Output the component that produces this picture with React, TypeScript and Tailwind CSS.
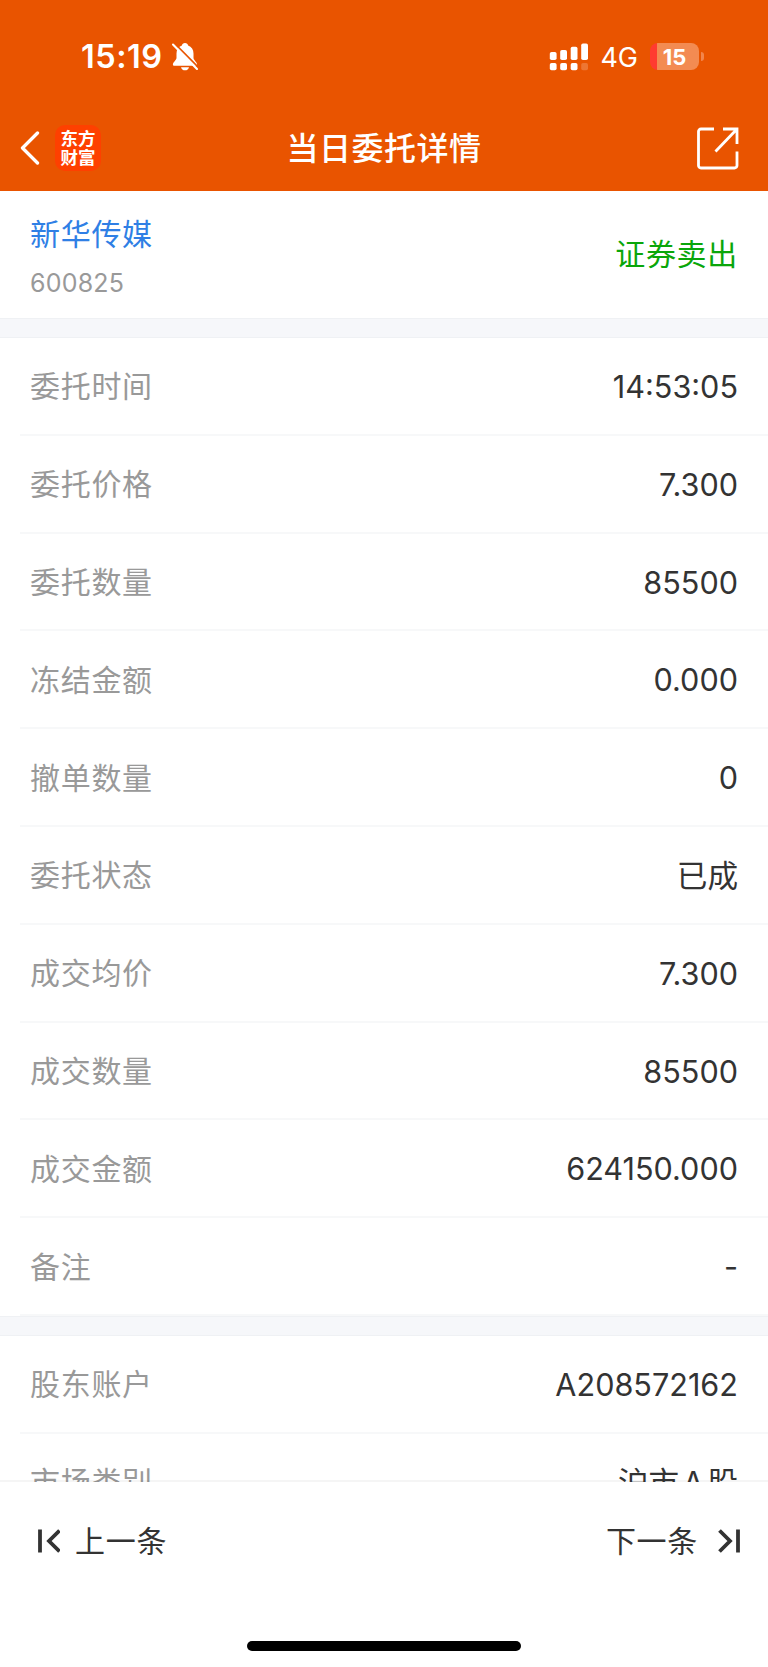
type Row = { label: string; value: string };

const orderRows: Row[] = [
  { label: "委托时间", value: "14:53:05" },
  { label: "委托价格", value: "7.300" },
  { label: "委托数量", value: "85500" },
  { label: "冻结金额", value: "0.000" },
  { label: "撤单数量", value: "0" },
  { label: "委托状态", value: "已成" },
  { label: "成交均价", value: "7.300" },
  { label: "成交数量", value: "85500" },
  { label: "成交金额", value: "624150.000" },
  { label: "备注", value: "-" },
];

const accountRows: Row[] = [
  { label: "股东账户", value: "A208572162" },
  { label: "市场类别", value: "沪市 A 股" },
];

function BellOff() {
  return (
    <svg width="28" height="30" viewBox="0 0 28 30" className="ml-[8px]">
      <path
        d="M14 1c1.700 0 2.900 1 3.100 2.400 3.500 1.200 5.400 4.200 5.400 8v4.300c0 2.500 3.600 4.300 3.600 6.800 0 .8-.6 1.300-1.500 1.300H3.400c-.9 0-1.500-.5-1.500-1.300 0-2.500 3.600-4.300 3.600-6.800v-4.300c0-3.800 1.900-6.800 5.400-8C11.100 2 12.300 1 14 1z"
        fill="#fff"
      />
      <path d="M10 25.200h8c-.4 1.900-1.900 3.100-4 3.100s-3.600-1.200-4-3.100z" fill="#fff" />
      <path d="M3.300 1.200 28.200 26.200" stroke="#e95400" strokeWidth="1.800" />
      <path d="M2 2.600 26 26.900" stroke="#fff" strokeWidth="2.100" strokeLinecap="round" />
    </svg>
  );
}

function Signal() {
  return (
    <svg width="40" height="28" viewBox="0 0 40 28" fill="#fff">
      <rect x="0.800" y="9" width="6.800" height="8" rx="1.800" />
      <rect x="11.200" y="7" width="6.800" height="10" rx="1.800" />
      <rect x="21.700" y="3.800" width="6.800" height="13.200" rx="1.800" />
      <rect x="32.200" y="0.500" width="6.800" height="16.500" rx="1.800" />
      <rect x="0.800" y="20" width="6.800" height="7.200" rx="1.800" />
      <rect x="11.200" y="20" width="6.800" height="7.200" rx="1.800" />
      <rect x="21.700" y="20" width="6.800" height="7.200" rx="1.800" />
      <rect x="32.200" y="20" width="6.800" height="7.200" rx="1.800" opacity="0.2" />
    </svg>
  );
}

function StatusBar() {
  return (
    <div className="flex h-[105px] items-start justify-between pr-[64px] pl-[81px] text-white">
      <div className="flex items-center pt-[42px]">
        <span className="text-[32.500px] leading-[30px] font-semibold tracking-[0.500px]">15:19</span>
        <BellOff />
      </div>
      <div className="flex h-[113px] items-center">
        <Signal />
        <span className="ml-[11px] pt-[2px] text-[27px] leading-[28px]">4G</span>
        <div className="ml-[12px] flex h-[27px] w-[49px] items-center justify-center overflow-hidden rounded-[8px] bg-linear-to-r from-[#ff3b30] from-[15%] to-[#f38b52] to-[15%] text-[22px] leading-none font-bold">
          <span>15</span>
        </div>
        <span className="ml-[2px] h-[9px] w-[3px] rounded-r-full bg-[#f2854c]" />
      </div>
    </div>
  );
}

function Header() {
  return (
    <header className="h-[191px] shrink-0 bg-[#e95400]">
      <StatusBar />
      <div className="grid h-[86px] grid-cols-3 items-center px-[20px] text-white">
        <div className="flex items-center">
          <svg width="21" height="34" viewBox="0 0 21 34" fill="none" stroke="#fff" strokeWidth="3.300" strokeLinecap="round" strokeLinejoin="round">
            <path d="M17.500 2 2.500 17l15 15" />
          </svg>
          <div className="ml-[14px] flex h-[46px] w-[46px] flex-col items-center justify-center rounded-[10px] bg-[#fe4000] text-[17.500px] leading-[19px] font-bold">
            <span>东方</span>
            <span>财富</span>
          </div>
        </div>
        <h1 className="pt-[2px] text-center text-[32px] leading-[40px] font-medium tracking-[0.5px] whitespace-nowrap">当日委托详情</h1>
        <svg className="mr-[9px] justify-self-end" width="43" height="44" viewBox="0 0 43 44" fill="none" stroke="#fff" strokeWidth="2.800">
          <path d="M18 3H5a2.500 2.500 0 0 0-2.500 2.500v34A2.500 2.500 0 0 0 5 42h33.500a2.500 2.500 0 0 0 2.500-2.500V25.500" />
          <path d="M27 3h14v15M41 3 19.500 25.500" />
        </svg>
      </div>
    </header>
  );
}

function Rows({ rows }: { rows: Row[] }) {
  return (
    <div className="pl-[20px]">
      {rows.map((row) => (
        <div
          key={row.label}
          className="flex h-[97.800px] items-center justify-between border-b-2 border-[#f7f8f9] pt-[2px] pr-[30px] pl-[10px]"
        >
          <span className="text-[30px] tracking-[0.700px] text-[#999]">{row.label}</span>
          <span className="text-[30.600px] [word-spacing:-5px] text-[#333]">{row.value}</span>
        </div>
      ))}
    </div>
  );
}

function Divider() {
  return <div className="h-[20px] shrink-0 border-y border-[#eff1f4] bg-[#f6f7fa]" />;
}

function Footer() {
  return (
    <footer className="flex h-[185px] shrink-0 flex-col justify-between bg-white pb-[16px] text-[30px] tracking-[0.700px] text-[#333]">
      <div className="flex h-[118px] items-center justify-between pr-[27px] pl-[36px]">
        <div className="flex items-center">
          <svg width="24" height="26" viewBox="0 0 24 26" fill="none" stroke="#333" strokeWidth="3.800">
            <path d="M4 1.500v23M23.500 2.500 13 13 23.500 23.500" />
          </svg>
          <span className="ml-[15px]">上一条</span>
        </div>
        <div className="flex items-center">
          <span className="mr-[19px]">下一条</span>
          <svg width="24" height="26" viewBox="0 0 24 26" fill="none" stroke="#333" strokeWidth="3.800">
            <path d="M21 1.500v23M2.500 2.500 13 13 2.500 23.500" />
          </svg>
        </div>
      </div>
      <div className="h-[10px] w-[274px] self-center rounded-full bg-black" />
    </footer>
  );
}

export default function App() {
  return (
    <div className="flex h-[1667px] w-[768px] flex-col overflow-hidden bg-white font-['Inter','Noto_Sans_CJK_SC',sans-serif]">
      <Header />
      <main className="relative min-h-0 flex-1 overflow-hidden">
        <section className="flex h-[127px] items-center justify-between px-[30px]">
          <div className="flex flex-col pt-[3px]">
            <span className="text-[30px] leading-[44px] tracking-[0.700px] text-[#2f7fe5]">新华传媒</span>
            <span className="mt-[10px] text-[25px] leading-[34px] tracking-[0.200px] text-[#999]">600825</span>
          </div>
          <span className="text-[30px] tracking-[0.700px] text-[#0aa60a]">证券卖出</span>
        </section>
        <Divider />
        <Rows rows={orderRows} />
        <Divider />
        <Rows rows={accountRows} />
        <div className="absolute inset-x-0 bottom-0 h-[2px] bg-black/4" />
      </main>
      <Footer />
    </div>
  );
}
